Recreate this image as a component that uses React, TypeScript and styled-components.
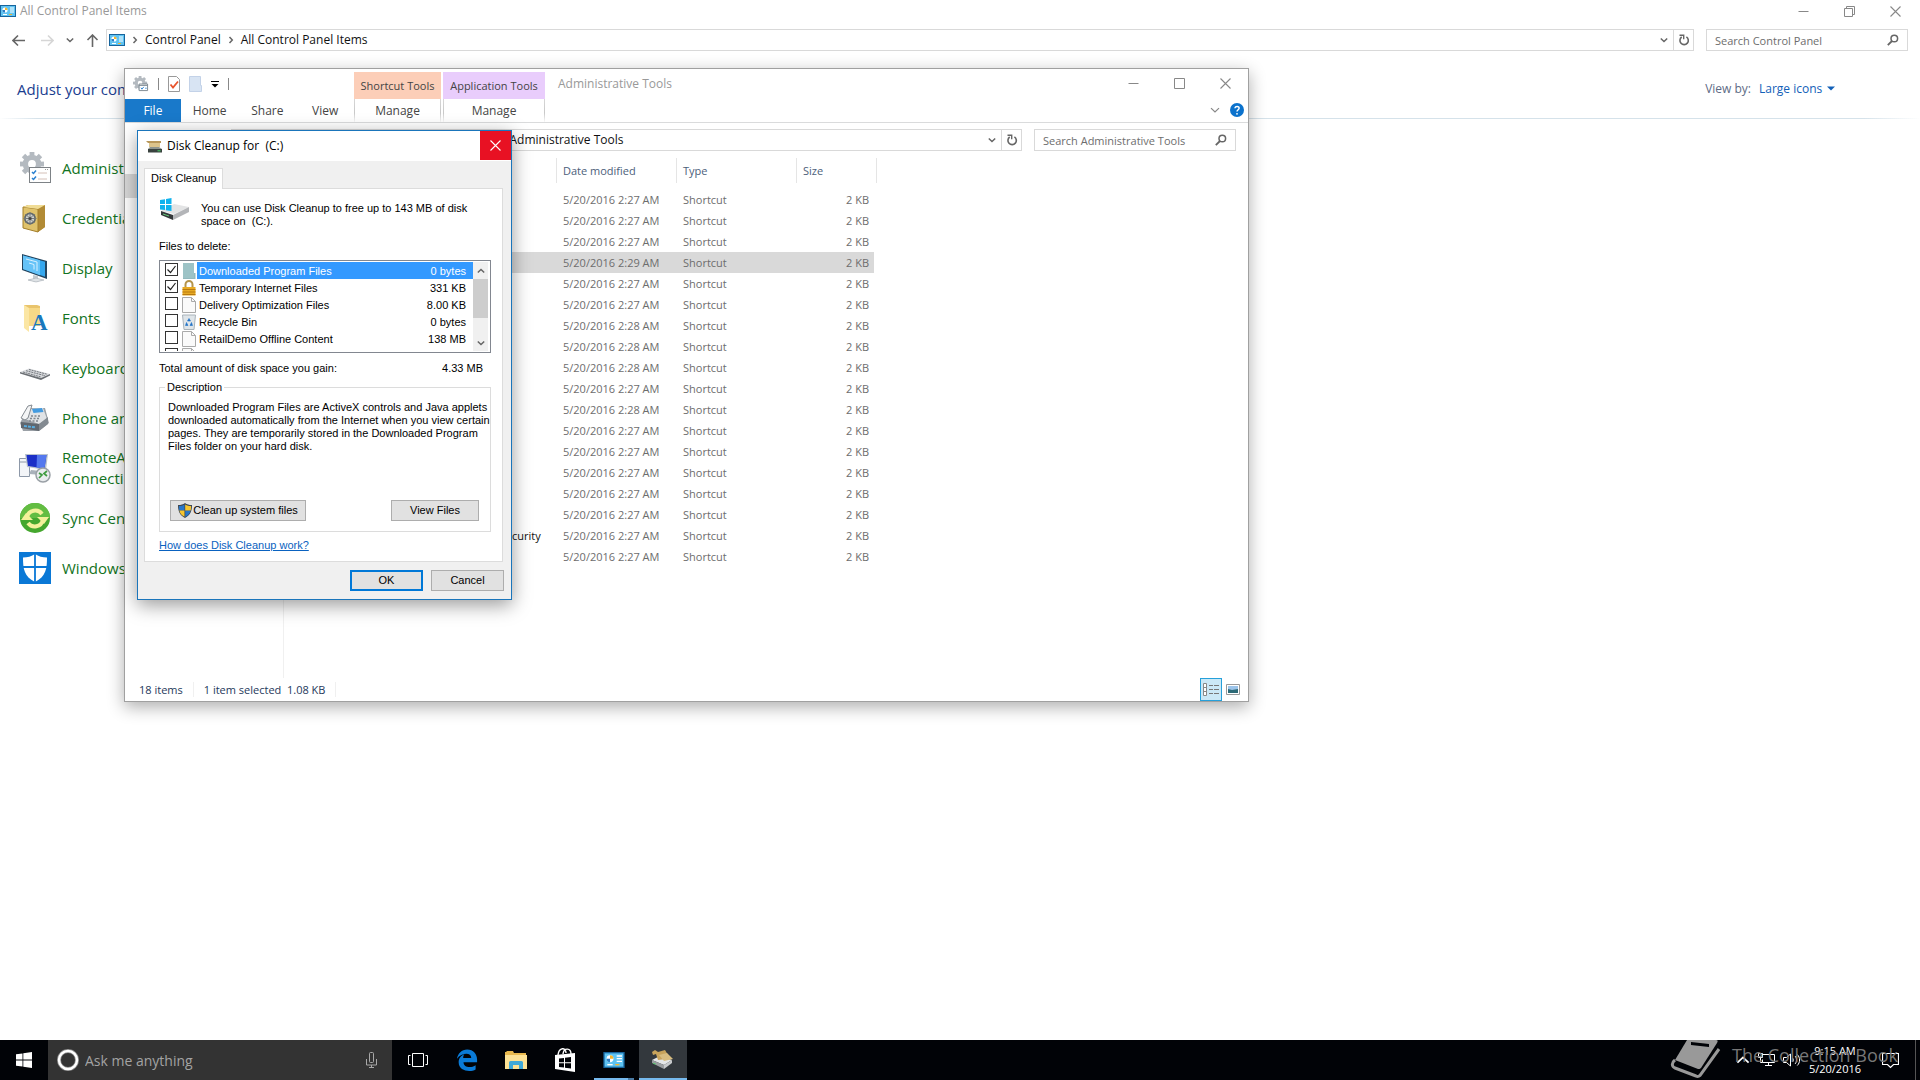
import React from "react";
import styled, { createGlobalStyle, css } from "styled-components";

const ui = `"Open Sans", "Noto Sans", sans-serif`;
const classic = `"Liberation Sans", Arial, sans-serif`;

const GlobalStyle = createGlobalStyle`
  *, *::before, *::after { box-sizing: border-box; }
  body { margin: 0; background: #fff; font-family: ${ui}; font-size: 11px; color: #000; }
  button, input, select { font: inherit; color: inherit; margin: 0; padding: 0; border: 0; background: none; border-radius: 0; }
  svg { display: block; flex: none; }
`;

/* ---------- Desktop ---------- */
const Desktop = styled.div`
  position: relative;
  min-height: 100vh;
  display: flex;
  flex-direction: column;
  overflow: hidden;
`;
const Maximized = styled.main`
  flex: 1;
  display: flex;
  flex-direction: column;
  background: #fff;
`;

/* ---------- Shared window parts ---------- */
const TitleBar = styled.header`
  display: flex;
  align-items: center;
  justify-content: space-between;
  height: 22px;
  padding-right: 2px;
`;
const TitleText = styled.h1`
  display: flex;
  align-items: center;
  gap: 4px;
  margin: 0;
  font-size: 12px;
  font-weight: 400;
  line-height: 16px;
  color: #999;
`;
const Captions = styled.div`
  display: flex;
`;
const CaptionButton = styled.button`
  width: 46px;
  height: 22px;
  display: flex;
  align-items: center;
  justify-content: center;
  color: #888;
`;
const NavRow = styled.nav<{ $inset?: boolean }>`
  display: flex;
  align-items: center;
  height: 22px;
  margin: ${(p) => (p.$inset ? 6 : 7)}px 12px 0 0;
  padding-left: ${(p) => (p.$inset ? 106 : 0)}px;
`;
const Arrows = styled.div`
  display: flex;
  align-items: center;
  gap: 12px;
  width: 106px;
  padding-left: 12px;
  > :first-child { margin-right: 4px; }
`;
const IconButton = styled.button`
  display: flex;
  align-items: center;
  justify-content: center;
`;
const Address = styled.div`
  flex: 1;
  display: flex;
  align-items: stretch;
  height: 22px;
  border: 1px solid #d9d9d9;
  background: #fff;
`;
const Crumbs = styled.div<{ $gap: number }>`
  flex: 1;
  display: flex;
  align-items: center;
  gap: ${(p) => p.$gap}px;
  padding-left: 2px;
  white-space: nowrap;
`;
const Crumb = styled.a`
  color: #111;
  text-decoration: none;
  font-size: 12px;
  line-height: 18px;
`;
const AddressButton = styled(IconButton)<{ $ruled?: boolean }>`
  width: 20px;
  color: #666;
  border-left: 1px solid ${(p) => (p.$ruled ? "#d9d9d9" : "transparent")};
`;
const Search = styled.label`
  display: flex;
  align-items: center;
  width: 202px;
  height: 22px;
  margin-left: 12px;
  padding: 0 8px;
  border: 1px solid #d9d9d9;
  color: #666;
`;
const SearchInput = styled.input`
  flex: 1;
  min-width: 0;
  outline: 0;
  font-size: 11px;
  &::placeholder { color: #6d6d6d; opacity: 1; }
`;

/* ---------- Control panel ---------- */
const PanelHeader = styled.div`
  display: flex;
  align-items: center;
  justify-content: space-between;
  height: 68px;
  padding: 8px 85px 0 17px;
  border-bottom: 1px solid;
  border-image: linear-gradient(90deg, #fff, #d5e2ea 2%, #d5e2ea 97%, #fff) 1;
`;
const PanelTitle = styled.h2`
  margin: 0;
  font-size: 15px;
  font-weight: 400;
  color: #1a3d8f;
`;
const ViewBy = styled.label`
  display: flex;
  align-items: center;
  color: #5d6b85;
  font-size: 12px;
`;
const ViewSelect = styled.select`
  appearance: none;
  margin: 0 4px 0 8px;
  color: #1260b8;
  font-size: 12px;
`;
const ItemList = styled.ul`
  margin: 24px 0 0;
  padding: 0 0 0 19px;
  list-style: none;
  width: 260px;
`;
const Item = styled.li`
  display: flex;
  align-items: center;
  gap: 11px;
  height: 50px;
`;
const ItemLink = styled.a`
  color: #127322;
  text-decoration: none;
  font-size: 15px;
  line-height: 21px;
`;

/* ---------- Administrative tools window ---------- */
const Explorer = styled.section`
  position: absolute;
  left: 124px;
  top: 68px;
  width: 1125px;
  height: 634px;
  display: flex;
  flex-direction: column;
  background: #fff;
  border: 1px solid #a0a0a0;
  box-shadow: 0 5px 16px rgba(0, 0, 0, 0.32);
`;
const Ribbon = styled.header`
  display: flex;
  height: 54px;
  border-bottom: 1px solid #dadbdc;
`;
const RibbonLeft = styled.div`
  display: flex;
  flex-direction: column;
  width: 229px;
`;
const QuickAccess = styled.div`
  display: flex;
  align-items: center;
  height: 30px;
  gap: 9px;
  padding-left: 8px;
`;
const Tick = styled.span`
  width: 1px;
  height: 12px;
  background: #888;
`;
const TabRow = styled.div`
  display: flex;
  height: 23px;
`;
const RibbonTab = styled.button<{ $file?: boolean }>`
  width: 58px;
  font-size: 12px;
  color: #444;
  ${(p) => p.$file && css`width: 56px; background: #1979ca; color: #fff;`}
`;
const ContextGroup = styled.div<{ $tone: string; $wide?: boolean }>`
  display: flex;
  flex-direction: column;
  width: ${(p) => (p.$wide ? 102 : 87)}px;
  margin: 3px 2px 0 0;
  color: #444;
  text-align: center;
  white-space: nowrap;
  > span {
    font-size: 11px;
    line-height: 27px;
    background: ${(p) => p.$tone};
  }
  > button {
    height: 23px;
    font-size: 12px;
    line-height: 23px;
    border: solid;
    border-width: 0 1px;
    border-image: linear-gradient(#d8d8d8, #c8c8c8 60%, #fff) 1;
  }
`;
const RibbonTitle = styled.h2`
  flex: 1;
  margin: 6px 0 0 11px;
  font-size: 12px;
  line-height: 18px;
  font-weight: 400;
  color: #999;
`;
const RibbonRight = styled.div`
  display: flex;
  flex-direction: column;
  align-items: flex-end;
`;
const RibbonHelp = styled.div`
  display: flex;
  align-items: center;
  gap: 10px;
  padding: 9px 4px 0 0;
`;
const ExplorerCaptions = styled(Captions)`
  padding-top: 3px;
`;
const ExplorerBody = styled.div`
  flex: 1;
  display: flex;
`;
const TreePane = styled.aside`
  width: 159px;
  padding-top: 23px;
  border-right: 1px solid #f0f0f0;
`;
const TreeSelected = styled.div`
  height: 24px;
  background: #d9d9d9;
`;
const FileTable = styled.table`
  margin-top: 7px;
  width: 593px;
  height: 0;
  table-layout: fixed;
  border-collapse: separate;
  border-spacing: 0;
  font-size: 11px;
  color: #6d6d6d;
`;
const Col = styled.col<{ $w: number }>`
  width: ${(p) => p.$w}px;
`;
const Th = styled.th`
  padding: 0 0 6px;
  font-weight: 400;
  text-align: left;
  color: #4c607a;
  > span {
    display: block;
    height: 25px;
    line-height: 25px;
    padding-left: 6px;
    border-right: 1px solid #e5e5e5;
  }
`;
const Row = styled.tr<{ $selected?: boolean }>`
  > td { background: ${(p) => (p.$selected ? "#d9d9d9" : "#fff")}; }
`;
const Td = styled.td<{ $name?: boolean; $size?: boolean }>`
  height: 21px;
  line-height: 21px;
  padding: 0 0 0 6px;
  white-space: nowrap;
  ${(p) => p.$name && css`color: #111; padding-left: 46px;`}
  ${(p) => p.$size && css`text-align: right; padding-right: 5px; border-right: 3px solid #fff;`}
`;
const StatusBar = styled.footer`
  display: flex;
  align-items: center;
  height: 23px;
  padding-left: 14px;
  font-size: 11px;
  color: #1e395b;
`;
const Status = styled.span`
  padding-right: 10px;
  margin-right: 10px;
  border-right: 1px solid #f0f0f0;
  white-space: pre;
`;
const ViewButtons = styled.div`
  display: flex;
  margin-left: auto;
  padding-right: 4px;
`;
const ViewButton = styled(IconButton)<{ $on?: boolean }>`
  width: 22px;
  height: 23px;
  ${(p) => p.$on && css`background: #cbe8f6; border: 1px solid #26a0da;`}
`;

/* ---------- Disk cleanup dialog ---------- */
const Dialog = styled.section`
  position: absolute;
  left: 137px;
  top: 130px;
  width: 375px;
  height: 470px;
  display: flex;
  flex-direction: column;
  background: #f0f0f0;
  border: 1px solid #1a75bb;
  box-shadow: 0 5px 18px rgba(0, 0, 0, 0.4);
  font-family: ${classic};
  font-size: 11px;
  line-height: 13px;
`;
const DialogTitle = styled.header`
  display: flex;
  align-items: flex-start;
  justify-content: space-between;
  height: 30px;
  background: #fff;
`;
const DialogName = styled.h2`
  display: flex;
  align-items: center;
  gap: 5px;
  height: 30px;
  margin: 0;
  padding-left: 8px;
  font: 400 12px/30px ${ui};
  white-space: pre;
`;
const CloseButton = styled.button`
  width: 31px;
  height: 29px;
  display: flex;
  align-items: center;
  justify-content: center;
  background: #e81123;
`;
const Tab = styled.button`
  align-self: flex-start;
  position: relative;
  z-index: 1;
  height: 21px;
  margin: 7px 0 -1px 6px;
  padding: 0 6px 1px;
  background: #fff;
  border: 1px solid #dcdcdc;
  border-bottom: 0;
`;
const Sheet = styled.div`
  flex: 1;
  display: flex;
  flex-direction: column;
  margin: 0 8px 0 6px;
  padding: 9px 11px 9px 14px;
  background: #fff;
  border: 1px solid #dcdcdc;
`;
const Intro = styled.div`
  display: flex;
  gap: 12px;
  height: 42px;
  padding-left: 1px;
  > p { margin: 4px 0 0; white-space: pre; }
`;
const FilesLabel = styled.h3`
  margin: 0 0 7px;
  font-size: 11px;
  font-weight: 400;
`;
const ListBox = styled.div`
  display: flex;
  height: 93px;
  border: 1px solid #828790;
  padding: 1px 2px 1px 4px;
`;
const ListRows = styled.div`
  flex: 1;
  overflow: hidden;
`;
const ListRow = styled.label`
  display: flex;
  align-items: center;
  height: 17px;
`;
const Check = styled.input`
  appearance: none;
  width: 13px;
  height: 13px;
  margin: 0 4px 2px 1px;
  border: 1px solid #333;
  background: #fff;
  &:checked {
    background: #fff url("data:image/svg+xml,%3Csvg xmlns='http://www.w3.org/2000/svg' viewBox='0 0 11 11'%3E%3Cpath d='M1.5 5.5l3 3 5-6.5' fill='none' stroke='%23222' stroke-width='1.2'/%3E%3C/svg%3E") center / 11px no-repeat;
  }
`;
const RowText = styled.span<{ $selected?: boolean }>`
  flex: 1;
  display: flex;
  justify-content: space-between;
  margin-left: 1px;
  padding: 1px 7px 0 2px;
  line-height: 16px;
  ${(p) => p.$selected && css`background: #3399ff; color: #fff;`}
`;
const ScrollTrack = styled.div`
  display: flex;
  flex-direction: column;
  width: 15px;
  background: #f0f0f0;
`;
const ScrollButton = styled(IconButton)`
  height: 17px;
  color: #505050;
`;
const ScrollThumb = styled.div`
  height: 39px;
  margin-bottom: auto;
  background: #cdcdcd;
`;
const Total = styled.p`
  display: flex;
  justify-content: space-between;
  margin: 9px 8px 6px 0;
`;
const Group = styled.fieldset`
  min-width: 0;
  height: 151px;
  margin: 0;
  padding: 7px 11px 11px 8px;
  border: 1px solid #dcdcdc;
  > legend { padding: 0 2px; margin-left: -3px; }
  > p { margin: 0; height: 99px; white-space: pre; }
`;
const GroupButtons = styled.div`
  display: flex;
  justify-content: space-between;
  padding-left: 2px;
`;
const PushButton = styled.button<{ $w: number; $primary?: boolean }>`
  display: flex;
  align-items: center;
  justify-content: center;
  gap: 1px;
  width: ${(p) => p.$w}px;
  height: 21px;
  background: #e1e1e1;
  border: 1px solid #adadad;
  ${(p) => p.$primary && css`border: 2px solid #0078d7;`}
`;
const HelpLink = styled.a`
  align-self: flex-start;
  margin-top: 7px;
  color: #0a62c0;
`;
const DialogFooter = styled.footer`
  display: flex;
  justify-content: flex-end;
  gap: 8px;
  padding: 8px 7px;
`;

/* ---------- Taskbar ---------- */
const Taskbar = styled.footer`
  position: relative;
  display: flex;
  height: 40px;
  background: #010307;
  color: #fff;
`;
const TaskButton = styled(IconButton)<{ $active?: boolean; $running?: boolean }>`
  width: 48px;
  height: 40px;
  ${(p) => p.$running && css`background: linear-gradient(90deg, #76b9ed 34px, #4a7ba5 34px) 4px 38px / 40px 2px no-repeat;`}
  ${(p) => p.$active && css`background: #33383d; border-bottom: 2px solid #76b9ed;`}
`;
const TaskSearch = styled.label`
  display: flex;
  align-items: center;
  gap: 6px;
  width: 344px;
  padding: 0 15px 0 9px;
  background: #333;
`;
const TaskInput = styled.input`
  flex: 1;
  min-width: 0;
  outline: 0;
  font-size: 14px;
  &::placeholder { color: #a3a3a3; opacity: 1; }
`;
const TaskItems = styled.div`
  display: flex;
  gap: 1px;
  padding-left: 2px;
`;
const Tray = styled.div`
  display: flex;
  align-items: center;
  margin-left: auto;
`;
const TrayIcons = styled.div`
  display: flex;
  align-items: center;
  gap: 8px;
`;
const Clock = styled.time`
  width: 70px;
  margin-right: 12px;
  font-size: 11px;
  line-height: 18px;
  text-align: center;
`;
const ShowDesktop = styled.button`
  width: 5px;
  height: 40px;
  margin-left: 16px;
  border-left: 1px solid #555;
`;
const Watermark = styled.div`
  position: absolute;
  right: 22px;
  top: 0;
  height: 40px;
  display: flex;
  align-items: flex-start;
  gap: 11px;
  font-size: 18px;
  line-height: 30px;
  color: #777;
`;

/* ---------- Icons ---------- */
const PanelIcon = ({ w = 16, h = 12 }: { w?: number; h?: number }) => (
  <svg width={w} height={h} viewBox="0 0 16 12">
    <rect x=".5" y=".5" width="15" height="11" fill="#5ec3f2" stroke="#17649c" />
    <circle cx="5" cy="5" r="2.6" fill="#fff" />
    <path d="M5 5V2.4A2.6 2.6 0 0 1 7.6 5z" fill="#f4b42b" />
    <path d="M5 5h-2.6a2.6 2.6 0 0 0 2.6 2.6z" fill="#2d7dc4" />
    <path d="M10 3h4M10 5h4M10 7h4" stroke="#fff" />
    <path d="M3 9.5h4" stroke="#fff" /><path d="M9 9.5h3" stroke="#f4b42b" />
  </svg>
);
const Minimize = () => <svg width="11" height="11" viewBox="0 0 11 11"><path d="M.5 5.5h10" stroke="currentColor" /></svg>;
const Maximize = () => <svg width="11" height="11" viewBox="0 0 11 11"><path d="M.5.5h10v10H.5z" fill="none" stroke="currentColor" /></svg>;
const Restore = () => <svg width="11" height="11" viewBox="0 0 11 11" fill="none" stroke="currentColor"><path d="M.5 2.500h8v8h-8zM2.500 2.500v-2h8v8H8.500" /></svg>;
const Cross = ({ color = "currentColor" }: { color?: string }) => <svg width="11" height="11" viewBox="0 0 11 11"><path d="M.5.5l10 10M10.500.5l-10 10" stroke={color} strokeWidth="1.1" /></svg>;
const Arrow = ({ turn = 0, color = "#666" }: { turn?: number; color?: string }) => (
  <svg width="13" height="13" viewBox="0 0 13 13"><g transform={`rotate(${turn} 6.500 6.500)`} fill="none" stroke={color} strokeWidth="1.600"><path d="M1 6.500h12M6 1.500l-5 5 5 5" /></g></svg>
);
const Chevron = ({ dir = "down", w = 8, color = "#666" }: { dir?: "down" | "up"; w?: number; color?: string }) => (
  <svg width={w} height={w} viewBox="0 0 8 8"><path d={dir === "down" ? "M.8 2.500L4 5.500l3.200-3" : "M.8 5.500L4 2.500l3.200 3"} fill="none" stroke={color} strokeWidth={w > 8 ? 1 : 1.5} /></svg>
);
const Next = () => <svg width="6" height="8" viewBox="0 0 6 8"><path d="M1.500 1L4.300 4 1.500 7" fill="none" stroke="#666" strokeWidth="1.500" /></svg>;
const Refresh = () => (
  <svg width="12" height="12" viewBox="0 0 12 12"><path d="M8.400 2.900a4.200 4.200 0 1 1-4.700.1" fill="none" stroke="#666" strokeWidth="1.600" /><path d="M1.500 .6H6.400v4.600H5V2H1.500z" fill="#666" /></svg>
);
const Magnifier = () => (
  <svg width="12" height="12" viewBox="0 0 12 12"><circle cx="7.300" cy="4.500" r="3.300" fill="none" stroke="#666" strokeWidth="1.500" /><path d="M5 7L.8 11.200" stroke="#666" strokeWidth="1.800" /></svg>
);
const gearTeeth = Array.from({ length: 8 }, (_, i) => i * 45);
const Gear = ({ cx, cy, r }: { cx: number; cy: number; r: number }) => (
  <g fill="#b4bac0">
    {gearTeeth.map((a) => <rect key={a} x={cx - r * 0.2} y={cy - r} width={r * 0.4} height={r * 0.5} transform={`rotate(${a} ${cx} ${cy})`} />)}
    <circle cx={cx} cy={cy} r={r * 0.55} fill="none" stroke="#b4bac0" strokeWidth={r * 0.45} />
  </g>
);
const ToolsIcon = () => (
  <svg width="32" height="32" viewBox="0 0 32 32">
    <Gear cx={13} cy={12} r={12} />
    <rect x="10.500" y="15.500" width="21" height="15" fill="#fff" stroke="#7d8286" />
    <path d="M26 17.500h1m1 0h1" stroke="#999" />
    <path d="M13 20l1.500 1.500L17 18.500M13 26l1.500 1.500 2.500-3" fill="none" stroke="#2a80d0" strokeWidth="1.500" />
    <path d="M19 21h9M19 27h9" stroke="#d4c0b8" />
  </svg>
);
const SafeIcon = () => (
  <svg width="32" height="32" viewBox="0 0 32 32">
    <path d="M4 5l5-2h17v22l-7 5z" fill="#b88e2c" /><path d="M19 7l7-4v22l-7 5z" fill="#b28b35" />
    <path d="M4 5l15 2v23L4 26z" fill="#dfc26b" stroke="#a37e2a" /><path d="M4 5l5-2h17l-7 4z" fill="#f0dc95" />
    <circle cx="11" cy="16.500" r="6" fill="#62686a" /><circle cx="11" cy="16.500" r="4.300" fill="#cfd2cf" />
    <path d="M11 10v13M4.500 16.500h13M6.500 12l9 9M15.500 12l-9 9" stroke="#74797a" /><circle cx="11" cy="16.500" r="1.500" fill="#444" />
  </svg>
);
const DisplayIcon = () => (
  <svg width="32" height="32" viewBox="0 0 32 32">
    <path d="M14 23l5 1v3l5 1-7 2-8-2 5-1z" fill="#c4cbd0" /><path d="M9 28l8-2 8 2-8 2z" fill="#dfe3e6" stroke="#9aa3aa" strokeWidth=".5" />
    <path d="M3 2l25 7v18L3 18z" fill="#24455f" /><path d="M4 3.500l22 6.200v15L4 17z" fill="#35a7ee" />
    <path d="M4 3.500l17 4.800v15L4 17z" fill="#65c3f8" /><path d="M7 7l11 3v9M10 11l5 1.500v5" fill="none" stroke="#d8f1ff" />
  </svg>
);
const FontsIcon = () => (
  <svg width="32" height="32" viewBox="0 0 32 32">
    <path d="M5 3h13l3 1v20L5 24z" fill="#e9c46c" /><path d="M5 3l5 3v24l-5-4z" fill="#fbe6a4" /><path d="M10 6h11v18H10z" fill="#f7d987" />
    <text x="12" y="28" fontFamily="Liberation Serif, serif" fontWeight="700" fontSize="23" fill="#1979bd">A</text>
  </svg>
);
const KeyboardIcon = () => (
  <svg width="32" height="32" viewBox="0 0 32 32">
    <path d="M1 20L10 16.500l21 5.500-9 4z" fill="#d8dadd" /><path d="M1 20l21 6 9-4v1.500L22 28 1 21.500z" fill="#6b6f74" />
    <path d="M4 20l18 5M7 18.700l19 5M10 17.500l18 4.700" stroke="#75797f" strokeDasharray="2 .7" strokeWidth="1" />
  </svg>
);
const PhoneIcon = () => (
  <svg width="32" height="32" viewBox="0 0 32 32">
    <path d="M1 21l8-15 17 0 4 15-10 8H4z" fill="#9ba1a7" /><path d="M6 17L11 7l13-1 4 11-8 5z" fill="#e0e3e6" />
    <path d="M2 20l18 2v7L2 26z" fill="#60676f" /><path d="M20 22l9-7v7l-9 7z" fill="#838a91" />
    <path d="M13 7l10-1 1.500 4-10 1z" fill="#439be0" />
    <path d="M12 14h9M11 16.500h10M10 19h10" stroke="#80878e" strokeDasharray="2 1.500" strokeWidth="1.500" />
    <path d="M2 16L9 4l4-1-4 13-3 2z" fill="#f4f5f6" stroke="#858b91" /><path d="M5 24l12 1.500" stroke="#5aaee0" strokeWidth="2" strokeDasharray="3 1" />
  </svg>
);
const RemoteIcon = () => (
  <svg width="32" height="32" viewBox="0 0 32 32">
    <path d="M.5 6.500h10v18H.5z" fill="#f3f5f8" stroke="#8d98a8" /><path d="M.5 10h9" stroke="#8d98a8" />
    <path d="M6 2l23 0-2 16L8 15z" fill="#b9c2cc" /><path d="M7.500 3h20l-2 13.500L9 14z" fill="#1c2fc7" /><path d="M18 3h9.500l-2 13.500-8-1z" fill="#5478ee" />
    <path d="M12 18l10 1 1 4-13-1z" fill="#aab2bb" />
    <circle cx="24" cy="23" r="7" fill="#e9ecee" stroke="#9aa0a6" strokeWidth="1.500" /><path d="M20 21l3 2-3 3M28 19l-3 2.500 3 2.500" fill="none" stroke="#3f9b40" strokeWidth="1.700" />
  </svg>
);
const SyncIcon = () => (
  <svg width="32" height="32" viewBox="0 0 32 32">
    <circle cx="16" cy="16" r="15" fill="#45a72e" /><path d="M1 16a15 15 0 0 1 30 0z" fill="#63bd42" />
    <path d="M8 15a8.500 8.500 0 0 1 15-3" fill="none" stroke="#f3f19a" strokeWidth="4" /><path d="M18 15h12l-5 7z" fill="#f3f19a" />
    <path d="M24 18a8.500 8.500 0 0 1-15 3" fill="none" stroke="#f3f19a" strokeWidth="4" /><path d="M2 18h12L7 11z" fill="#f3f19a" />
  </svg>
);
const DefenderIcon = () => (
  <svg width="32" height="32" viewBox="0 0 32 32">
    <path d="M0 0h32v32H0z" fill="#0a78d6" />
    <path d="M16 2c3.500 2.500 7.500 3.500 12 3.500 0 11-1 19-12 24.500C5 24.500 4 16.500 4 5.500 8.500 5.500 12.500 4.500 16 2z" fill="#fff" />
    <path d="M16 2v28M3 15h26" stroke="#0a78d6" strokeWidth="1.800" />
  </svg>
);
const ToolsSmall = () => (
  <svg width="16" height="16" viewBox="0 0 17 17"><Gear cx={7.500} cy={7.500} r={7.500} /><path d="M6.500 8.500h9v7h-9z" fill="#fff" stroke="#7b868f" /><path d="M6.500 10h9" stroke="#7b868f" /><path d="M8.500 12.500l1 1.500 2-2.500M13 13h1.500" fill="none" stroke="#2a80d0" /></svg>
);
const CheckPage = () => (
  <svg width="12" height="16" viewBox="0 0 12 16"><path d="M.5.5h8l3 3v12H.5z" fill="#fff" stroke="#999" /><path d="M2.500 8.500l2.500 3 5-6" fill="none" stroke="#e8542c" strokeWidth="1.800" /></svg>
);
const FolderPage = () => <svg width="13" height="16" viewBox="0 0 13 16"><path d="M.5.5h11v9h1v6H.5z" fill="#d8e4f3" stroke="#c3d2e8" /></svg>;
const QuickMenu = () => <svg width="8" height="7" viewBox="0 0 8 7"><path d="M0 .5h8" stroke="#000" /><path d="M.5 3h7L4 6.500z" /></svg>;
const HelpIcon = () => (
  <svg width="14" height="14" viewBox="0 0 14 14"><circle cx="7" cy="7" r="7" fill="#0b72cc" /><path d="M5 5.300C5 2.700 9.200 2.900 9.100 5.200 9 6.700 7 6.800 7 8.600" fill="none" stroke="#fff" strokeWidth="1.500" /><circle cx="7" cy="10.800" r=".9" fill="#fff" /></svg>
);
const DetailsIcon = () => (
  <svg width="16" height="13" viewBox="0 0 16 13"><path d="M.5.5h3v12h-3zM.5 4.500h3M.5 8.500h3" fill="#fff" stroke="#888" /><path d="M6 2.500h4m1 0h5M6 6.500h4m1 0h5M6 10.500h4m1 0h5" stroke="#777" /></svg>
);
const ThumbIcon = () => (
  <svg width="14" height="11" viewBox="0 0 14 11"><path d="M.5.5h13v10H.5z" fill="#fff" stroke="#999" /><path d="M2 2h10v7H2z" fill="#9cc4ea" /><path d="M2 5l4 1 6-1v4H2z" fill="#2d6a77" /></svg>
);
const CleanupIcon = () => (
  <svg width="16" height="13" viewBox="0 0 16 13"><path d="M0 1h15v2H2z" fill="#b8975a" /><path d="M3 3h11v4H3z" fill="#dcc48c" /><path d="M4 7h9l3 2H2z" fill="#8d948f" /><path d="M2 9h14v3.500H2z" fill="#39423f" /><path d="M11.500 10.800h3" stroke="#49d36a" /></svg>
);
const DriveIcon = () => (
  <svg width="29" height="23" viewBox="0 0 29 23">
    <path d="M1 13l13-7 15 3-15 7z" fill="#e3e4e5" /><path d="M1 13l12 4v5L1 17z" fill="#34383b" /><path d="M13 17l16-8v5l-16 8z" fill="#b3b5b8" />
    <path d="M3 16l6 2" stroke="#63c476" />
    <path d="M0 2l5-.7V6H0zM6 1.100L11.500 0v6H6zM0 7h5v5l-5-.6zM6 7h5.500v6L6 12.200z" fill="#10b3ee" />
  </svg>
);
const PageIcon = () => <svg width="14" height="16" viewBox="0 0 14 16"><path d="M.5.500h9l4 4v11H.5z" fill="#fafafa" stroke="#aaa" /><path d="M9.500.5v4h4" fill="none" stroke="#aaa" /></svg>;
const TealFolder = () => <svg width="14" height="16" viewBox="0 0 14 16"><path d="M1 0h11v10h1.500v6H1z" fill="#92b9bd" /><path d="M1 0h11v15H1z" fill="#9dc3c6" /></svg>;
const LockIcon = () => <svg width="14" height="16" viewBox="0 0 14 16"><path d="M3.500 8V4.500a3.500 3.500 0 0 1 7 0V8" fill="none" stroke="#b5944a" strokeWidth="2" /><path d="M.5 7h13v8.500H.5z" fill="#e8aa23" /><path d="M.5 9.500h13M.5 12h13M.5 14.500h13" stroke="#b87a10" /></svg>;
const BinIcon = () => <svg width="14" height="16" viewBox="0 0 14 16"><path d="M.5 1h13l-1.500 14.500H2z" fill="#dfe5e9" stroke="#a9b3ba" /><path d="M7 4.500l1.500 2.500h-3zM4.500 8.500L6 11.500H3.500zM9.500 8.500l1 3H8z" fill="#2273c8" stroke="#2273c8" strokeWidth=".6" /></svg>;
const ShieldIcon = () => (
  <svg width="14" height="15" viewBox="0 0 14 15"><path d="M7 0c2 1.500 4 2 7 2 0 6-1.500 10-7 13C1.500 12 0 8 0 2c3 0 5-.5 7-2z" fill="#3c4650" /><path d="M6.500 1.500v6H1.300C1 6 1 4.500 1 3c2 0 4-.5 5.500-1.500zM7.200 7.500h5.400c-.6 3-2.400 5-5.400 6.500z" fill="#2876c8" /><path d="M7.200 1.500C9 2.500 11 3 13 3c0 1.500 0 3-.3 4.500H7.200zM6.500 7.500v6.300C3.500 12.300 2 10.500 1.400 7.500z" fill="#f7c62f" /></svg>
);
const StartIcon = () => <svg width="16" height="16" viewBox="0 0 16 16" fill="#fff"><path d="M0 2.300l6.500-.9v6.200H0zM7.300 1.300L16 0v7.600H7.300zM0 8.400h6.500v6.200L0 13.700zM7.300 8.400H16V16l-8.700-1.300z" /></svg>;
const Cortana = () => <svg width="22" height="22" viewBox="0 0 22 22"><circle cx="11" cy="11" r="9" fill="none" stroke="#888" strokeWidth="4" /><circle cx="11" cy="11" r="9" fill="none" stroke="#fff" strokeWidth="2.500" /></svg>;
const Mic = () => <svg width="11" height="16" viewBox="0 0 11 16" fill="none" stroke="#a8a8a8"><rect x="3.500" y=".5" width="4" height="10" rx="1" /><path d="M.5 7v6h10V7M5.500 13v2.500M3 15.500h5" /></svg>;
const TaskView = () => <svg width="20" height="14" viewBox="0 0 20 14" fill="none" stroke="#fff"><path d="M4.500.5h11v13h-11zM2.500 2.500h-2v9h2M17.500 2.500h2v9h-2" /></svg>;
const Edge = () => (
  <svg width="22" height="22" viewBox="0 0 24 24"><path d="M1 10.700C2 5 6.200.5 12.200.5 19 .5 23 5.400 23 11.500v2.900H8.200c.2 6.300 8.600 6.500 13.200 3.200v4.700c-5.500 3.300-18.500 2.200-18.500-7.800 0-4.500 2.600-7.300 6.300-8.800C8 7 7.800 8.600 7.900 9.700h8.700C16.900 3.300 6 3.800 1 10.700z" fill="#0a7bd8" /></svg>
);
const Files = () => (
  <svg width="22" height="18" viewBox="0 0 22 18"><path d="M0 1h1l1-1h6l1 2h12v4H0z" fill="#e9b94e" /><path d="M0 4h22v14H0z" fill="#fde295" /><path d="M4 18v-6.500A1.500 1.500 0 0 1 5.500 10h11a1.500 1.500 0 0 1 1.500 1.500V18h-4v-4H8v4z" fill="#40a9d8" /></svg>
);
const Store = () => (
  <svg width="22" height="24" viewBox="0 0 22 24"><path d="M4 7C5-1 12-1 12 5M9 6c1-7 8-6 8 0" fill="none" stroke="#fff" strokeWidth="1.400" /><path d="M1 7l20-2v19L1 21z" fill="#fff" /><path d="M5 10.500l5-.6v4.400H5zM11 9.800l6-.7v5.200h-6zM5 15.200h5v4.400l-5-.6zM11 15.200h6v5.300l-6-.8z" fill="#010307" /></svg>
);
const CleanupTask = () => (
  <svg width="24" height="20" viewBox="0 0 24 20"><path d="M1 11l8-4 12 4-8 5z" fill="#e5e7e8" /><path d="M1 11l12 5v4L1 14z" fill="#9a9da0" /><path d="M13 16l8-5v3l-8 6z" fill="#c8cacc" /><path d="M2 14.200l3 1" stroke="#55c56c" /><path d="M1 3l3-2 3 2 7-2 3 5-2 4-8 1-2-6-3 1z" fill="#c8a35b" /><path d="M8 6l8-2 6 6-9 2z" fill="#d9bd80" /></svg>
);
const Network = () => <svg width="17" height="14" viewBox="0 0 17 14" fill="none" stroke="#fff"><path d="M4.500 1.500h12v8h-12v-3M10.500 9.500v3M7 12.500h7" /><path d="M.5.5h4v4h-4zM2.500 4.500v5h2" /></svg>;
const Volume = () => <svg width="17" height="14" viewBox="0 0 17 14" fill="none" stroke="#fff"><path d="M.5 4.500h3l4-3.500v12l-4-3.500h-3zM9.500 5c1 1 1 3 0 4M12 3c2 2 2 6 0 8M14.300 1.500c3 3 3 8 0 11" /></svg>;
const Action = () => <svg width="17" height="17" viewBox="0 0 17 17"><path d="M.5 1.500h16v11h-5l-3 3-3-3h-5z" fill="none" stroke="#fff" strokeWidth="1.200" /></svg>;
const Book = () => (
  <svg width="51" height="38" viewBox="0 0 51 38"><path d="M17 0h29c2 0 2 1 1 3L31 28c-1 1-2 1-3 1L5 20z" fill="#999" /><path d="M21 2l18 2v3L21 5z" fill="#010307" /><path d="M5 20c-4 3-3 7 0 8l21 8c2 1 4 0 5-2L49 9" fill="none" stroke="#999" strokeWidth="3" /></svg>
);

/* ---------- Data ---------- */
const panelItems = [
  { name: "Administrative Tools", icon: <ToolsIcon /> },
  { name: "Credential Manager", icon: <SafeIcon /> },
  { name: "Display", icon: <DisplayIcon /> },
  { name: "Fonts", icon: <FontsIcon /> },
  { name: "Keyboard", icon: <KeyboardIcon /> },
  { name: "Phone and Modem", icon: <PhoneIcon /> },
  { name: "RemoteApp and Desktop Connections", icon: <RemoteIcon /> },
  { name: "Sync Center", icon: <SyncIcon /> },
  { name: "Windows Defender", icon: <DefenderIcon /> },
];
const times = [
  "2:27", "2:27", "2:27", "2:29", "2:27", "2:27", "2:28", "2:28", "2:28",
  "2:27", "2:28", "2:27", "2:27", "2:27", "2:27", "2:27", "2:27", "2:27",
];
const names: Record<number, string> = { 16: "Windows Firewall with Advanced Security" };
const selectedFile = 3;
const cleanup = [
  { name: "Downloaded Program Files", size: "0 bytes", on: true, icon: <TealFolder /> },
  { name: "Temporary Internet Files", size: "331 KB", on: true, icon: <LockIcon /> },
  { name: "Delivery Optimization Files", size: "8.00 KB", icon: <PageIcon /> },
  { name: "Recycle Bin", size: "0 bytes", icon: <BinIcon /> },
  { name: "RetailDemo Offline Content", size: "138 MB", icon: <PageIcon /> },
  { name: "", size: "", icon: <PageIcon /> },
];

const ControlPanel = () => (
  <Maximized>
    <TitleBar>
      <TitleText><PanelIcon />All Control Panel Items</TitleText>
      <Captions>
        <CaptionButton aria-label="Minimize"><Minimize /></CaptionButton>
        <CaptionButton aria-label="Restore"><Restore /></CaptionButton>
        <CaptionButton aria-label="Close"><Cross /></CaptionButton>
      </Captions>
    </TitleBar>
    <NavRow>
      <Arrows>
        <IconButton aria-label="Back"><Arrow /></IconButton>
        <IconButton aria-label="Forward"><Arrow turn={180} color="#d6d6d6" /></IconButton>
        <IconButton aria-label="Recent locations"><Chevron /></IconButton>
        <IconButton aria-label="Up"><Arrow turn={90} /></IconButton>
      </Arrows>
      <Address>
        <Crumbs $gap={7}>
          <PanelIcon />
          <Next /><Crumb href="#">Control Panel</Crumb>
          <Next /><Crumb href="#">All Control Panel Items</Crumb>
        </Crumbs>
        <AddressButton aria-label="Previous locations"><Chevron /></AddressButton>
        <AddressButton $ruled aria-label="Refresh"><Refresh /></AddressButton>
      </Address>
      <Search>
        <SearchInput aria-label="Search Control Panel" placeholder="Search Control Panel" />
        <Magnifier />
      </Search>
    </NavRow>
    <PanelHeader>
      <PanelTitle>Adjust your computer’s settings</PanelTitle>
      <ViewBy>
        View by:
        <ViewSelect defaultValue="Large icons"><option>Large icons</option></ViewSelect>
        <svg width="8" height="5" viewBox="0 0 8 5"><path d="M0 .5h8L4 4.500z" fill="#1260b8" /></svg>
      </ViewBy>
    </PanelHeader>
    <ItemList>
      {panelItems.map((i) => <Item key={i.name}>{i.icon}<ItemLink href="#">{i.name}</ItemLink></Item>)}
    </ItemList>
  </Maximized>
);

const AdminTools = () => (
  <Explorer>
    <Ribbon>
      <RibbonLeft>
        <QuickAccess>
          <ToolsSmall /><Tick />
          <IconButton aria-label="Properties"><CheckPage /></IconButton>
          <IconButton aria-label="New folder"><FolderPage /></IconButton>
          <IconButton aria-label="Customize toolbar"><QuickMenu /></IconButton>
          <Tick />
        </QuickAccess>
        <TabRow>
          <RibbonTab $file>File</RibbonTab><RibbonTab>Home</RibbonTab><RibbonTab>Share</RibbonTab><RibbonTab>View</RibbonTab>
        </TabRow>
      </RibbonLeft>
      <ContextGroup $tone="#fcceb8"><span>Shortcut Tools</span><button>Manage</button></ContextGroup>
      <ContextGroup $tone="#e9cdfc" $wide><span>Application Tools</span><button>Manage</button></ContextGroup>
      <RibbonTitle>Administrative Tools</RibbonTitle>
      <RibbonRight>
        <ExplorerCaptions>
          <CaptionButton aria-label="Minimize"><Minimize /></CaptionButton>
          <CaptionButton aria-label="Maximize"><Maximize /></CaptionButton>
          <CaptionButton aria-label="Close"><Cross /></CaptionButton>
        </ExplorerCaptions>
        <RibbonHelp>
          <IconButton aria-label="Expand the ribbon"><Chevron w={10} color="#888" /></IconButton>
          <IconButton aria-label="Help"><HelpIcon /></IconButton>
        </RibbonHelp>
      </RibbonRight>
    </Ribbon>
    <NavRow $inset>
      <Address>
        <Crumbs $gap={9}>
          <PanelIcon /><Crumb href="#">Control Panel</Crumb><Next />
          <Crumb href="#">All Control Panel Items</Crumb><Next />
          <Crumb href="#">Administrative Tools</Crumb>
        </Crumbs>
        <AddressButton aria-label="Previous locations"><Chevron /></AddressButton>
        <AddressButton $ruled aria-label="Refresh"><Refresh /></AddressButton>
      </Address>
      <Search>
        <SearchInput aria-label="Search Administrative Tools" placeholder="Search Administrative Tools" />
        <Magnifier />
      </Search>
    </NavRow>
    <ExplorerBody>
      <TreePane><TreeSelected /></TreePane>
      <div>
        <FileTable>
          <colgroup><Col $w={273} /><Col $w={120} /><Col $w={120} /><Col $w={80} /></colgroup>
          <thead>
            <tr>
              <Th aria-label="Name"><span /></Th>
              {["Date modified", "Type", "Size"].map((h) => <Th key={h}><span>{h}</span></Th>)}
            </tr>
          </thead>
          <tbody>
            {times.map((time, i) => (
              <Row key={i} $selected={i === selectedFile}>
                <Td $name>{names[i]}</Td><Td>5/20/2016 {time} AM</Td><Td>Shortcut</Td><Td $size>2 KB</Td>
              </Row>
            ))}
          </tbody>
        </FileTable>
      </div>
    </ExplorerBody>
    <StatusBar>
      <Status>18 items</Status>
      <Status>{"1 item selected  1.08 KB"}</Status>
      <ViewButtons>
        <ViewButton $on aria-label="Details view"><DetailsIcon /></ViewButton>
        <ViewButton aria-label="Thumbnail view"><ThumbIcon /></ViewButton>
      </ViewButtons>
    </StatusBar>
  </Explorer>
);

const CleanupDialog = () => (
  <Dialog role="dialog" aria-label="Disk Cleanup">
    <DialogTitle>
      <DialogName><CleanupIcon />{"Disk Cleanup for  (C:)"}</DialogName>
      <CloseButton aria-label="Close"><Cross color="#fff" /></CloseButton>
    </DialogTitle>
    <Tab>Disk Cleanup</Tab>
    <Sheet>
      <Intro>
        <DriveIcon />
        <p>{"You can use Disk Cleanup to free up to 143 MB of disk\nspace on  (C:)."}</p>
      </Intro>
      <FilesLabel>Files to delete:</FilesLabel>
      <ListBox>
        <ListRows>
          {cleanup.map((c, i) => (
            <ListRow key={i}>
              <Check type="checkbox" defaultChecked={c.on} aria-label={c.name || "More files"} />
              {c.icon}
              <RowText $selected={i === 0}><span>{c.name}</span><span>{c.size}</span></RowText>
            </ListRow>
          ))}
        </ListRows>
        <ScrollTrack>
          <ScrollButton aria-label="Scroll up"><Chevron dir="up" /></ScrollButton>
          <ScrollThumb />
          <ScrollButton aria-label="Scroll down"><Chevron /></ScrollButton>
        </ScrollTrack>
      </ListBox>
      <Total><span>Total amount of disk space you gain:</span><span>4.33 MB</span></Total>
      <Group>
        <legend>Description</legend>
        <p>{"Downloaded Program Files are ActiveX controls and Java applets\ndownloaded automatically from the Internet when you view certain\npages. They are temporarily stored in the Downloaded Program\nFiles folder on your hard disk."}</p>
        <GroupButtons>
          <PushButton $w={136}><ShieldIcon />Clean up system files</PushButton>
          <PushButton $w={88}>View Files</PushButton>
        </GroupButtons>
      </Group>
      <HelpLink href="#">How does Disk Cleanup work?</HelpLink>
    </Sheet>
    <DialogFooter>
      <PushButton $w={73} $primary>OK</PushButton>
      <PushButton $w={73}>Cancel</PushButton>
    </DialogFooter>
  </Dialog>
);

export default function App() {
  return (
    <>
      <GlobalStyle />
      <Desktop>
        <ControlPanel />
        <AdminTools />
        <CleanupDialog />
        <Taskbar>
          <Watermark><Book />The Collection Book</Watermark>
          <TaskButton aria-label="Start"><StartIcon /></TaskButton>
          <TaskSearch>
            <Cortana />
            <TaskInput aria-label="Ask me anything" placeholder="Ask me anything" />
            <Mic />
          </TaskSearch>
          <TaskItems>
            <TaskButton aria-label="Task View"><TaskView /></TaskButton>
            <TaskButton aria-label="Edge"><Edge /></TaskButton>
            <TaskButton aria-label="File Explorer"><Files /></TaskButton>
            <TaskButton aria-label="Store"><Store /></TaskButton>
            <TaskButton $running aria-label="Control Panel"><PanelIcon w={22} h={16} /></TaskButton>
            <TaskButton $active aria-label="Disk Cleanup"><CleanupTask /></TaskButton>
          </TaskItems>
          <Tray>
            <TrayIcons>
              <IconButton aria-label="Show hidden icons"><Chevron dir="up" w={14} color="#fff" /></IconButton>
              <Network />
              <Volume />
            </TrayIcons>
            <Clock>9:15 AM<br />5/20/2016</Clock>
            <IconButton aria-label="Notifications"><Action /></IconButton>
            <ShowDesktop aria-label="Show desktop" />
          </Tray>
        </Taskbar>
      </Desktop>
    </>
  );
}
